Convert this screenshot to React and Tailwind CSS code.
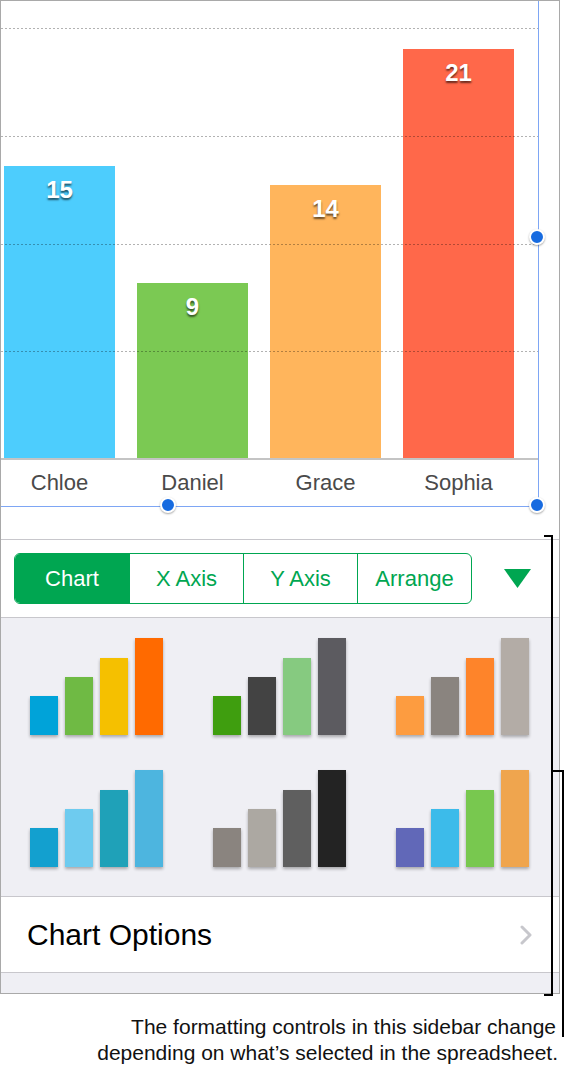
import React from 'react';

const bars = [
  { name: 'Chloe', value: 15, color: 'bg-[#4dcdfd]' },
  { name: 'Daniel', value: 9, color: 'bg-[#7bc953]' },
  { name: 'Grace', value: 14, color: 'bg-[#ffb55c]' },
  { name: 'Sophia', value: 21, color: 'bg-[#ff684a]' },
];

const gridTops = ['top-[27px]', 'top-[135px]', 'top-[243px]', 'top-[350px]'];

const styles = [
  ['bg-[#00a3d9]', 'bg-[#6fba44]', 'bg-[#f5c000]', 'bg-[#ff6a00]'],
  ['bg-[#3f9e0f]', 'bg-[#434343]', 'bg-[#86ca80]', 'bg-[#5c5b60]'],
  ['bg-[#fd9c40]', 'bg-[#8a847f]', 'bg-[#fe842a]', 'bg-[#b3aca6]'],
  ['bg-[#13a0cf]', 'bg-[#6ecbef]', 'bg-[#1fa1b8]', 'bg-[#4db5df]'],
  ['bg-[#8a847f]', 'bg-[#aca8a2]', 'bg-[#5f5f5f]', 'bg-[#232323]'],
  ['bg-[#6168b8]', 'bg-[#3cbbea]', 'bg-[#78c84f]', 'bg-[#efa54e]'],
];

const thumbHeights = ['h-[39px]', 'h-[58px]', 'h-[77px]', 'h-[97px]'];

const tabs = ['Chart', 'X Axis', 'Y Axis', 'Arrange'];

const Handle = ({ className }) => (
  <div
    className={`absolute h-[16px] w-[16px] rounded-full border-2 border-white bg-[#176be0] shadow-[0_1px_2px_rgba(0,0,0,0.35)] ${className}`}
  />
);

const App = () => {
  return (
    <div className="relative h-[1072px] w-[568px] overflow-hidden bg-white font-['Liberation_Sans',Arial,sans-serif]">
      {/* Screen frame */}
      <div className="flex h-[994px] w-[560px] flex-col border border-[#a9a9a9]">
        {/* Chart canvas */}
        <div className="h-[538px] shrink-0 bg-white">
          <div className="relative h-[506px] w-[538px] border-r-[1.5px] border-b-[1.5px] border-[#7ea6f4]">
            <div className="flex h-[459px] items-end gap-[22px] border-b-2 border-[#c4c4c4] pl-[3px]">
              {bars.map((bar) => (
                <div
                  key={bar.name}
                  className={`w-[111px] ${bar.color} pt-[12px] text-center text-[24px] leading-[24px] font-bold text-white [text-shadow:0_2px_2px_rgba(0,0,0,0.6)]`}
                  style={{ height: `${bar.value * 19.5}px` }}
                >
                  {bar.value}
                </div>
              ))}
            </div>
            <div className="flex h-[44px] items-center gap-[22px] pl-[3px]">
              {bars.map((bar) => (
                <div key={bar.name} className="w-[111px] text-center text-[22px] text-[#4a4a4a]">
                  {bar.name}
                </div>
              ))}
            </div>

            {/* dotted grid lines */}
            {gridTops.map((t) => (
              <div
                key={t}
                className={`absolute left-0 right-0 h-px ${t} bg-[repeating-linear-gradient(90deg,rgba(0,0,0,0.3)_0_2px,transparent_2px_4px)]`}
              />
            ))}

            <Handle className="left-[528px] top-[228px]" />
            <Handle className="left-[159px] top-[496px]" />
            <Handle className="left-[528px] top-[496px]" />
          </div>
        </div>

        {/* Sidebar */}
        <div className="flex flex-1 flex-col border-t border-[#c8c7cc]">
          <div className="flex h-[77px] shrink-0 items-center justify-between bg-white pl-[13px] pr-[28px]">
            <div className="flex h-[51px] overflow-hidden rounded-[6px] border-[1.5px] border-[#00a651]">
              {tabs.map((tab, i) => (
                <div
                  key={tab}
                  className={`flex w-[114px] items-center justify-center text-[22px] ${
                    i === 0 ? 'bg-[#00a651] text-white' : 'border-l-[1.5px] border-[#00a651] text-[#00a651]'
                  }`}
                >
                  {tab}
                </div>
              ))}
            </div>
            <svg width="27" height="19" viewBox="0 0 27 19">
              <polygon points="0,0 27,0 13.5,19" fill="#00a651" />
            </svg>
          </div>

          <div className="grid h-[279px] shrink-0 grid-cols-[133px_133px_133px] content-start gap-x-[50px] gap-y-[35px] border-t border-[#c8c7cc] bg-[#efeff4] pt-[20px] pl-[29px]">
            {styles.map((set, i) => (
              <div key={i} className="flex h-[97px] items-end gap-[7px]">
                {set.map((c, j) => (
                  <div
                    key={j}
                    className={`w-[28px] ${thumbHeights[j]} ${c} shadow-[0_2px_3px_rgba(0,0,0,0.3)]`}
                  />
                ))}
              </div>
            ))}
          </div>

          <div className="flex h-[77px] shrink-0 items-center justify-between border-y border-[#c8c7cc] bg-white pl-[26px] pr-[27px]">
            <span className="text-[30px] text-black">Chart Options</span>
            <svg width="12" height="20" viewBox="0 0 12 20">
              <polyline points="2,2 10,10 2,18" fill="none" stroke="#c7c7cc" strokeWidth="3" strokeLinecap="round" strokeLinejoin="round" />
            </svg>
          </div>

          <div className="flex-1 bg-[#efeff4]" />
        </div>
      </div>

      {/* Caption */}
      <div className="mt-[20px] text-right text-[21px] leading-[26px] text-[#111]">
        <div className="pr-[12px]">The formatting controls in this sidebar change</div>
        <div className="pr-[10px]">depending on what’s selected in the spreadsheet.</div>
      </div>

      {/* Callout brackets */}
      <div className="absolute left-[544px] top-[535px] h-[461px] w-[9px] border-y-2 border-r-2 border-black" />
      <div className="absolute left-[553px] top-[770px] h-[267px] w-[11px] border-t-2 border-r-2 border-black" />
    </div>
  );
};

export default App;
